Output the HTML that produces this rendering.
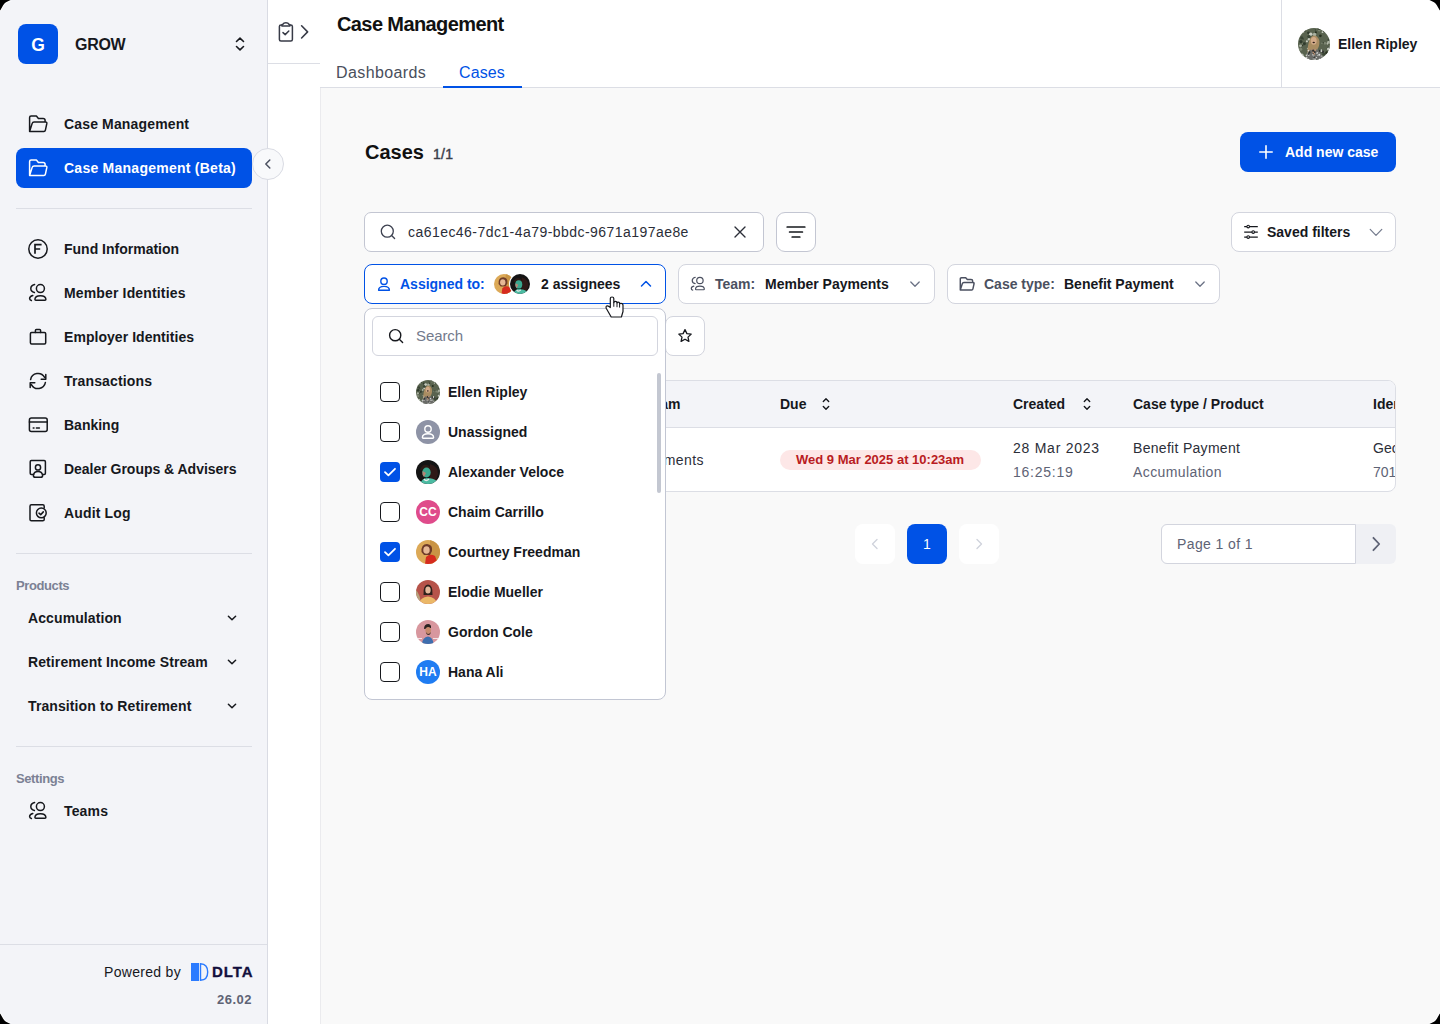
<!DOCTYPE html>
<html><head><meta charset="utf-8">
<style>
*{box-sizing:border-box;margin:0;padding:0}
html,body{width:1440px;height:1024px;overflow:hidden;background:#000}
body{font-family:"Liberation Sans",sans-serif;color:#16181d;position:relative}
.win{position:absolute;left:0;top:0;width:1440px;height:1024px;overflow:hidden;background:#f9f9f9}
.a{position:absolute}
svg{display:block;position:absolute;overflow:visible}
.st{fill:none;stroke:#16181d;stroke-width:1.5;stroke-linecap:round;stroke-linejoin:round}
.b{font-weight:700}
.nw{white-space:nowrap}
/* sidebar */
.side{position:absolute;left:0;top:0;width:268px;height:1024px;background:#f3f4f8;border-right:1px solid #d9dbe3}
.logo{position:absolute;left:18px;top:24px;width:40px;height:40px;border-radius:8px;background:#0052e6;color:#fff;font-weight:700;font-size:17.5px;line-height:42px;text-align:center}
.nv{position:absolute;left:64px;font-size:14px;font-weight:700;line-height:18px;white-space:nowrap;color:#16181d;letter-spacing:0.15px}
.hr{position:absolute;left:16px;width:236px;height:1px;background:#dcdee5}
.sec{position:absolute;left:16px;font-size:13px;font-weight:700;color:#7b8194;line-height:16px;letter-spacing:-0.4px}
.prod{position:absolute;left:28px;font-size:14px;font-weight:700;line-height:18px;color:#16181d;white-space:nowrap;letter-spacing:0.1px}
.col2{position:absolute;left:268px;top:0;width:52px;height:1024px;background:#fff}
.hdr{position:absolute;left:320px;top:0;width:1120px;height:88px;background:#fff;border-bottom:1px solid #dcdee5}
</style></head>
<body><div class="win">

<!-- SIDEBAR -->
<div class="side">
  <div class="logo">G</div>
  <div class="a b" style="left:75px;top:36px;font-size:16px;line-height:18px;letter-spacing:-0.3px">GROW</div>
  <svg style="left:230px;top:34px" width="20" height="20" viewBox="0 0 20 20"><path class="st" d="M6.5 7.5L10 4.2l3.5 3.3M6.5 12.5L10 15.8l3.5-3.3" style="stroke-width:1.6"/></svg>

  <svg style="left:28px;top:114px" width="20" height="20" viewBox="0 0 20 20"><path class="st" d="M1.6 17.6V3.6Q1.6 2.1 3.1 2.1H8.4L10.4 4.4H15.1Q17.1 4.4 17.1 6.4V8.1M1.6 17.6L4.1 9.6Q4.6 8.1 6.1 8.1H17.6Q19.1 8.1 18.8 9.7L17.4 16.2Q17.1 17.6 15.9 17.6Z"/></svg>
  <div class="nv" style="top:115px">Case Management</div>

  <div class="a" style="left:16px;top:148px;width:236px;height:40px;border-radius:8px;background:#0052e6"></div>
  <svg style="left:28px;top:158px" width="20" height="20" viewBox="0 0 20 20"><path class="st" style="stroke:#fff" d="M1.6 17.6V3.6Q1.6 2.1 3.1 2.1H8.4L10.4 4.4H15.1Q17.1 4.4 17.1 6.4V8.1M1.6 17.6L4.1 9.6Q4.6 8.1 6.1 8.1H17.6Q19.1 8.1 18.8 9.7L17.4 16.2Q17.1 17.6 15.9 17.6Z"/></svg>
  <div class="nv" style="top:159px;color:#fff;letter-spacing:0.25px">Case Management (Beta)</div>

  <div class="hr" style="top:208px"></div>

  <svg style="left:28px;top:239px" width="20" height="20" viewBox="0 0 20 20"><circle class="st" cx="10" cy="10" r="9.2"/><path class="st" d="M7 14.8V5.6h6.6M7 10h5.2" style="stroke-linecap:butt;stroke-linejoin:miter;stroke-width:1.7"/></svg>
  <div class="nv" style="top:240px;letter-spacing:0">Fund Information</div>

  <svg style="left:28px;top:283px" width="20" height="20" viewBox="0 0 20 20"><circle class="st" cx="12.4" cy="5.6" r="4"/><path class="st" d="M6.9 16.3Q7.1 12.7 12.4 12.7Q17.7 12.7 17.9 16.3Q17.9 17.2 17 17.2H7.8Q6.9 17.2 6.9 16.3Z"/><path class="st" d="M6.6 1.6Q2.8 2.6 2.8 5.6Q2.8 8.8 6.4 9.6M4.8 12.6Q1.6 13.4 1.6 15.6Q1.6 17.2 3.4 17.6"/></svg>
  <div class="nv" style="top:284px">Member Identities</div>

  <svg style="left:28px;top:327px" width="20" height="20" viewBox="0 0 20 20"><rect class="st" x="2.4" y="5.6" width="15.3" height="11.4" rx="1.2"/><path class="st" d="M7.4 5.4V3.4Q7.4 2.4 8.4 2.4H11.6Q12.6 2.4 12.6 3.4V5.4"/></svg>
  <div class="nv" style="top:328px;letter-spacing:0.05px">Employer Identities</div>

  <svg style="left:28px;top:371px" width="20" height="20" viewBox="0 0 20 20"><path class="st" d="M2.6 8.6A7.5 7.5 0 0 1 16.6 6.4M17.8 3.4V8.2H13.2M17.4 11.4A7.5 7.5 0 0 1 3.4 13.6M2.2 16.6V11.8H6.8"/></svg>
  <div class="nv" style="top:372px">Transactions</div>

  <svg style="left:28px;top:415px" width="20" height="20" viewBox="0 0 20 20"><rect class="st" x="1.4" y="3" width="17.8" height="13.6" rx="2"/><path class="st" d="M1.4 6.9H19.2M5.2 13H6M8.4 13H11.4"/></svg>
  <div class="nv" style="top:416px;letter-spacing:0">Banking</div>

  <svg style="left:28px;top:459px" width="20" height="20" viewBox="0 0 20 20"><path class="st" d="M5.6 15.4H3.4Q2.2 15.4 2.2 14.2V2.8Q2.2 1.6 3.4 1.6H16.2Q17.4 1.6 17.4 2.8V14.2Q17.4 15.4 16.2 15.4H14.6"/><circle class="st" cx="10" cy="8.4" r="2.6"/><path class="st" d="M5.4 16.4Q6 12.6 10 12.6Q14 12.6 14.6 16.4Q14.6 18.3 12.6 18.3H7.4Q5.4 18.3 5.4 16.4Z"/></svg>
  <div class="nv" style="top:460px;letter-spacing:-0.02px">Dealer Groups &amp; Advisers</div>

  <svg style="left:28px;top:503px" width="20" height="20" viewBox="0 0 20 20"><path class="st" d="M16.2 5V3.2Q16.2 1.8 14.8 1.8H3.4Q2 1.8 2 3.2V16.4Q2 17.8 3.4 17.8H14.8Q16.2 17.8 16.2 16.4V14.8"/><circle class="st" cx="13.3" cy="9.9" r="4.9"/><path class="st" d="M11 10.2L12.7 11.7L15.3 8.9" style="stroke-width:1.6"/></svg>
  <div class="nv" style="top:504px">Audit Log</div>

  <div class="hr" style="top:553px"></div>
  <div class="sec" style="top:578px">Products</div>
  <div class="prod" style="top:609px">Accumulation</div>
  <svg style="left:222px;top:608px" width="20" height="20" viewBox="0 0 20 20"><path class="st" d="M6.4 8.2L10 11.8L13.6 8.2"/></svg>
  <div class="prod" style="top:653px">Retirement Income Stream</div>
  <svg style="left:222px;top:652px" width="20" height="20" viewBox="0 0 20 20"><path class="st" d="M6.4 8.2L10 11.8L13.6 8.2"/></svg>
  <div class="prod" style="top:697px">Transition to Retirement</div>
  <svg style="left:222px;top:696px" width="20" height="20" viewBox="0 0 20 20"><path class="st" d="M6.4 8.2L10 11.8L13.6 8.2"/></svg>

  <div class="hr" style="top:746px"></div>
  <div class="sec" style="top:771px">Settings</div>
  <svg style="left:28px;top:801px" width="20" height="20" viewBox="0 0 20 20"><circle class="st" cx="12.4" cy="5.6" r="4"/><path class="st" d="M6.9 16.3Q7.1 12.7 12.4 12.7Q17.7 12.7 17.9 16.3Q17.9 17.2 17 17.2H7.8Q6.9 17.2 6.9 16.3Z"/><path class="st" d="M6.6 1.6Q2.8 2.6 2.8 5.6Q2.8 8.8 6.4 9.6M4.8 12.6Q1.6 13.4 1.6 15.6Q1.6 17.2 3.4 17.6"/></svg>
  <div class="nv" style="top:802px">Teams</div>

  <div class="a" style="left:0;top:944px;width:267px;height:1px;background:#dcdee5"></div>
  <div class="a nw" style="left:104px;top:964px;font-size:14px;line-height:16px;color:#16181d;letter-spacing:0.3px">Powered by</div>
  <div class="a" style="left:191px;top:963px;width:8px;height:18px;background:#2b7bff"></div>
  <svg style="left:199px;top:963px" width="12" height="18" viewBox="0 0 12 18"><path d="M1.5 0.7Q8.7 1 8.7 9Q8.7 17 1.5 17.3Z" fill="none" stroke="#2b7bff" stroke-width="1.4"/></svg>
  <div class="a b nw" style="left:212px;top:963px;font-size:15px;line-height:17px;color:#120f3d;letter-spacing:0.9px;-webkit-text-stroke:0.3px #120f3d">DLTA</div>
  <div class="a b nw" style="left:217px;top:992px;font-size:13px;line-height:15px;color:#5e6375;letter-spacing:0.5px">26.02</div>
</div>

<!-- COLUMN 2 -->
<div class="col2">
  <svg style="left:8px;top:22px" width="20" height="20" viewBox="0 0 20 20"><path class="st" style="stroke:#383b47" d="M5.8 2.9H5Q3.4 2.9 3.4 4.5V17.6Q3.4 19.1 5 19.1H14.8Q16.4 19.1 16.4 17.6V4.5Q16.4 2.9 14.8 2.9H14"/><path class="st" style="stroke:#383b47" d="M5.9 3.9V3.1Q5.9 2.4 6.8 2.3Q7.6 0.8 9.9 0.8Q12.2 0.8 13 2.3Q13.9 2.4 13.9 3.1V3.9Z"/><path class="st" style="stroke:#383b47" d="M7 10.6L9.2 12.6L12.8 9"/></svg>
  <svg style="left:30px;top:22px" width="20" height="20" viewBox="0 0 20 20"><path class="st" d="M3.6 3.8L9.6 9.9L3.6 16" style="stroke-width:1.6;stroke:#383b47"/></svg>
  <div class="a" style="left:0;top:63px;width:52px;height:1px;background:#dcdee5"></div>
</div>

<!-- HEADER -->
<div class="hdr">
  <div class="a b nw" style="left:17px;top:12px;font-size:20px;line-height:24px;letter-spacing:-0.6px;color:#111">Case Management</div>
  <div class="a nw" style="left:16px;top:63px;font-size:16px;line-height:20px;color:#4a4f5c;letter-spacing:0.4px">Dashboards</div>
  <div class="a nw" style="left:139px;top:63px;font-size:16px;line-height:20px;color:#0052e6;letter-spacing:0.1px">Cases</div>
  <div class="a" style="left:123px;top:86px;width:79px;height:2px;background:#0052e6"></div>
  <div class="a" style="left:961px;top:0;width:1px;height:87px;background:#dcdee5"></div>
</div>


<!-- HEADER USER -->
<div class="a" style="left:1298px;top:28px;width:32px;height:32px"><svg width="32" height="32" viewBox="0 0 24 24" style="position:static"><clipPath id="ch1"><circle cx="12" cy="12" r="12"/></clipPath><g clip-path="url(#ch1)"><rect width="24" height="24" fill="#59634f"/><circle cx="7.8" cy="3.6" r="1.0" fill="#2f3a2c"/><circle cx="19.7" cy="2.3" r="1.0" fill="#27301f"/><circle cx="5.2" cy="2.1" r="0.8" fill="#3a4536"/><circle cx="2.2" cy="10.2" r="1.2" fill="#2f3a2c"/><circle cx="22.7" cy="15.1" r="1.0" fill="#2f3a2c"/><circle cx="13.9" cy="9.5" r="1.3" fill="#2f3a2c"/><circle cx="13.4" cy="3.2" r="0.8" fill="#27301f"/><circle cx="2.8" cy="7.4" r="1.2" fill="#3a4536"/><circle cx="2.5" cy="13.7" r="0.7" fill="#2f3a2c"/><circle cx="13.1" cy="1.5" r="0.5" fill="#3a4536"/><circle cx="11.9" cy="12.8" r="1.1" fill="#c6cbbf"/><circle cx="14.1" cy="10.9" r="0.7" fill="#3a4536"/><circle cx="16.8" cy="5.9" r="1.0" fill="#27301f"/><circle cx="11.9" cy="8.2" r="0.9" fill="#27301f"/><circle cx="23.5" cy="2.8" r="0.8" fill="#a9b0a0"/><circle cx="3.6" cy="11.7" r="0.5" fill="#7d8672"/><circle cx="1.9" cy="13.4" r="1.1" fill="#a9b0a0"/><circle cx="8.2" cy="8.4" r="0.9" fill="#c6cbbf"/><circle cx="1.7" cy="2.2" r="0.7" fill="#7d8672"/><circle cx="15.9" cy="1.5" r="1.1" fill="#7d8672"/><circle cx="13.9" cy="16.3" r="0.9" fill="#7d8672"/><circle cx="9.3" cy="16.0" r="0.5" fill="#c6cbbf"/><circle cx="8.5" cy="14.7" r="0.9" fill="#3a4536"/><circle cx="18.4" cy="3.1" r="0.7" fill="#c6cbbf"/><circle cx="22.0" cy="11.9" r="0.6" fill="#c6cbbf"/><circle cx="13.2" cy="21.2" r="1.2" fill="#27301f"/><circle cx="6.7" cy="10.0" r="0.8" fill="#c6cbbf"/><circle cx="23.0" cy="3.6" r="0.6" fill="#3a4536"/><circle cx="15.8" cy="0.3" r="1.2" fill="#3a4536"/><circle cx="6.3" cy="0.1" r="0.8" fill="#a9b0a0"/><circle cx="14.6" cy="7.6" r="0.6" fill="#27301f"/><circle cx="22.8" cy="15.7" r="1.1" fill="#c6cbbf"/><circle cx="21.6" cy="18.7" r="1.2" fill="#27301f"/><circle cx="9.4" cy="9.6" r="0.6" fill="#7d8672"/><circle cx="9.6" cy="4.6" r="1.3" fill="#c6cbbf"/><circle cx="3.9" cy="8.2" r="0.5" fill="#2f3a2c"/><circle cx="13.6" cy="12.9" r="1.3" fill="#27301f"/><circle cx="0.6" cy="21.0" r="1.0" fill="#3a4536"/><circle cx="15.2" cy="22.9" r="1.0" fill="#c6cbbf"/><circle cx="2.9" cy="20.4" r="1.3" fill="#c6cbbf"/><circle cx="11.5" cy="7.5" r="0.6" fill="#7d8672"/><circle cx="8.2" cy="6.4" r="1.2" fill="#3a4536"/><circle cx="12.4" cy="4.9" r="1.3" fill="#a9b0a0"/><circle cx="3.5" cy="13.0" r="0.5" fill="#27301f"/><circle cx="7.2" cy="15.4" r="0.6" fill="#a9b0a0"/><circle cx="12.4" cy="21.8" r="0.8" fill="#3a4536"/><circle cx="12.8" cy="18.7" r="0.8" fill="#3a4536"/><circle cx="14.7" cy="18.9" r="1.1" fill="#3a4536"/><circle cx="19.3" cy="19.6" r="1.1" fill="#3a4536"/><circle cx="4.8" cy="11.8" r="1.1" fill="#2f3a2c"/><circle cx="19.0" cy="11.3" r="0.7" fill="#27301f"/><circle cx="23.0" cy="10.7" r="1.2" fill="#a9b0a0"/><circle cx="22.9" cy="8.8" r="0.7" fill="#3a4536"/><circle cx="11.3" cy="8.1" r="0.9" fill="#27301f"/><circle cx="20.2" cy="11.5" r="1.0" fill="#7d8672"/><circle cx="2.0" cy="15.9" r="1.2" fill="#7d8672"/><circle cx="18.0" cy="11.5" r="0.6" fill="#7d8672"/><circle cx="8.0" cy="19.2" r="1.3" fill="#c6cbbf"/><circle cx="11.1" cy="17.8" r="0.6" fill="#3a4536"/><circle cx="4.1" cy="3.0" r="0.6" fill="#c6cbbf"/><path d="M7 19Q7.5 6.5 12 5.6Q16.5 6 16 12Q15.6 16 13 17L9 19Z" fill="#a98d62"/><ellipse cx="11.8" cy="9.6" rx="2.2" ry="2.9" fill="#d2aa88"/><ellipse cx="11.8" cy="10.9" rx="0.9" ry="0.6" fill="#2b1c18"/><path d="M5.5 24Q6.5 16 12 15.8Q17.5 16 18.5 24Z" fill="#6a6b68"/><path d="M10 16L12 21L13.6 16Z" fill="#c99a78"/><circle cx="16.5" cy="17.2" r="0.8" fill="#2e302e"/><circle cx="14.5" cy="18.8" r="0.7" fill="#d8dad6"/><circle cx="6.3" cy="22.4" r="0.8" fill="#d8dad6"/><circle cx="12.8" cy="23.5" r="0.6" fill="#d8dad6"/><circle cx="16.7" cy="17.7" r="0.5" fill="#2e302e"/><circle cx="12.5" cy="22.1" r="0.6" fill="#9a9c98"/><circle cx="11.4" cy="17.0" r="0.9" fill="#2e302e"/><circle cx="17.7" cy="21.3" r="0.8" fill="#9a9c98"/><circle cx="11.5" cy="23.3" r="0.7" fill="#9a9c98"/><circle cx="8.0" cy="20.1" r="0.8" fill="#d8dad6"/><circle cx="13.9" cy="22.2" r="0.5" fill="#d8dad6"/><circle cx="12.2" cy="21.8" r="0.7" fill="#2e302e"/><circle cx="14.9" cy="20.2" r="0.6" fill="#d8dad6"/><circle cx="17.5" cy="16.5" r="0.5" fill="#d8dad6"/><circle cx="16.0" cy="20.1" r="0.7" fill="#d8dad6"/><circle cx="11.8" cy="20.9" r="0.7" fill="#9a9c98"/><circle cx="8.6" cy="18.2" r="0.7" fill="#2e302e"/><circle cx="12.6" cy="18.0" r="0.7" fill="#2e302e"/><circle cx="18.0" cy="23.1" r="0.5" fill="#2e302e"/><circle cx="7.8" cy="17.0" r="0.6" fill="#d8dad6"/><circle cx="14.7" cy="19.4" r="0.5" fill="#2e302e"/><circle cx="16.2" cy="23.2" r="0.5" fill="#9a9c98"/><circle cx="14.4" cy="18.9" r="0.5" fill="#d8dad6"/><circle cx="18.6" cy="17.8" r="0.9" fill="#2e302e"/><circle cx="17.5" cy="17.3" r="0.7" fill="#d8dad6"/><circle cx="8.1" cy="19.5" r="0.7" fill="#2e302e"/><circle cx="11.5" cy="18.9" r="0.4" fill="#2e302e"/><circle cx="6.3" cy="20.4" r="0.6" fill="#d8dad6"/><circle cx="11.0" cy="20.1" r="0.5" fill="#d8dad6"/><circle cx="7.5" cy="23.3" r="0.5" fill="#d8dad6"/></g></svg></div>
<div class="a b nw" style="left:1338px;top:36px;font-size:14px;line-height:17px;color:#16181d">Ellen Ripley</div>

<!-- MAIN -->
<div class="a b nw" style="left:365px;top:141px;font-size:20px;line-height:22px;color:#111">Cases</div>
<div class="a nw" style="left:433px;top:147px;font-size:14px;line-height:14px;color:#3b3f4b;-webkit-text-stroke:0.45px #3b3f4b;letter-spacing:0.3px">1/1</div>

<div class="a" style="left:1240px;top:132px;width:156px;height:40px;border-radius:8px;background:#0052e6"></div>
<svg style="left:1258px;top:144px" width="16" height="16" viewBox="0 0 16 16"><path d="M8 1.8V14.2M1.8 8H14.2" stroke="#fff" stroke-width="1.6" stroke-linecap="round"/></svg>
<div class="a b nw" style="left:1285px;top:144px;font-size:14px;line-height:16px;color:#fff">Add new case</div>

<!-- search -->
<div class="a" style="left:364px;top:212px;width:400px;height:40px;border-radius:7px;background:#fff;border:1px solid #c3c6d2"></div>
<svg style="left:380px;top:224px" width="16" height="16" viewBox="0 0 16 16"><circle cx="7.3" cy="7.2" r="6" fill="none" stroke="#3d4150" stroke-width="1.3"/><path d="M11.6 11.5L14.6 14.5" stroke="#3d4150" stroke-width="1.3" stroke-linecap="round"/></svg>
<div class="a nw" style="left:408px;top:224px;font-size:14px;line-height:16px;color:#2b2e38;letter-spacing:0.45px">ca61ec46-7dc1-4a79-bbdc-9671a197ae8e</div>
<svg style="left:732px;top:224px" width="16" height="16" viewBox="0 0 16 16"><path d="M3 3L13 13M13 3L3 13" stroke="#2b2e38" stroke-width="1.35" stroke-linecap="round"/></svg>

<div class="a" style="left:776px;top:212px;width:40px;height:40px;border-radius:9px;background:#fff;border:1px solid #c3c6d2"></div>
<svg style="left:786px;top:222px" width="20" height="20" viewBox="0 0 20 20"><path d="M1.2 5H18.8M3.6 10H16.4M6.2 15H13.8" stroke="#16181d" stroke-width="1.7" stroke-linecap="round"/></svg>

<div class="a" style="left:1231px;top:212px;width:165px;height:40px;border-radius:8px;background:#fff;border:1px solid #d3d5de"></div>
<svg style="left:1243px;top:223px" width="16" height="18" viewBox="0 0 16 18"><path d="M1.2 3.6H14.8M1.2 9.1H14.8M1.2 14.1H14.8" stroke="#16181d" stroke-width="1.2"/><circle cx="5.2" cy="3.6" r="1.3" fill="#fff" stroke="#16181d" stroke-width="1.1"/><circle cx="10.2" cy="9.1" r="1.3" fill="#fff" stroke="#16181d" stroke-width="1.1"/><circle cx="5.2" cy="14.1" r="1.3" fill="#fff" stroke="#16181d" stroke-width="1.1"/></svg>
<div class="a b nw" style="left:1267px;top:224px;font-size:14px;line-height:16px;color:#16181d">Saved filters</div>
<svg style="left:1368px;top:224px" width="16" height="16" viewBox="0 0 16 16"><path d="M2.2 5.4L8 11.4L13.8 5.4" fill="none" stroke="#737a8c" stroke-width="1.2" stroke-linecap="round" stroke-linejoin="round"/></svg>

<!-- chips -->
<div class="a" style="left:364px;top:264px;width:302px;height:40px;border-radius:8px;background:#fff;border:1px solid #0052e6"></div>
<svg style="left:376px;top:276px" width="16" height="16" viewBox="0 0 16 16"><circle cx="8" cy="5.2" r="3.2" fill="none" stroke="#0052e6" stroke-width="1.4"/><path d="M2.6 14.2Q2.6 10.4 8 10.4Q13.4 10.4 13.4 14.2Z" fill="none" stroke="#0052e6" stroke-width="1.4" stroke-linejoin="round"/></svg>
<div class="a b nw" style="left:400px;top:276px;font-size:14px;line-height:16px;color:#0052e6">Assigned to:</div>
<div class="a" style="left:494px;top:274px;width:20px;height:20px"><svg width="20" height="20" viewBox="0 0 24 24" style="position:static"><clipPath id="cc1"><circle cx="12" cy="12" r="12"/></clipPath><g clip-path="url(#cc1)"><rect width="24" height="24" fill="#dca957"/><rect x="14" width="10" height="24" fill="#c99445"/><path d="M5.5 12Q5 4 11 4Q17 4.5 16 11L14 15H8Z" fill="#6e3b29"/><ellipse cx="10.5" cy="10" rx="3.2" ry="3.8" fill="#e6b896"/><path d="M9 24L10 17Q14 13 19 16L22 24Z" fill="#d62b1f"/></g></svg></div>
<div class="a" style="left:509px;top:273px;width:22px;height:22px;border-radius:50%;background:#fff"></div>
<div class="a" style="left:510px;top:274px;width:20px;height:20px"><svg width="20" height="20" viewBox="0 0 24 24" style="position:static"><clipPath id="cc2"><circle cx="12" cy="12" r="12"/></clipPath><g clip-path="url(#cc2)"><rect width="24" height="24" fill="#141414"/><path d="M14 4Q22 6 22 14L20 20H14Z" fill="#3a1d18" opacity=".7"/><path d="M4 10Q6 4 11 5Q15 6 14 10Z" fill="#2b1a15"/><ellipse cx="10.5" cy="12.5" rx="4.2" ry="5" fill="#3aa88f"/><path d="M6.5 11Q6 15 8 17L10 13Z" fill="#b98476"/><path d="M4 24Q6 18 11 18Q17 18 21 21L22 24Z" fill="#4bbba2"/><path d="M8 19Q10 22 13 19" stroke="#e8e8e8" stroke-width="1.4" fill="none"/></g></svg></div>
<div class="a b nw" style="left:541px;top:276px;font-size:14px;line-height:16px;color:#16181d">2 assignees</div>
<svg style="left:638px;top:276px" width="16" height="16" viewBox="0 0 16 16"><path d="M3.5 10L8 5.5L12.5 10" fill="none" stroke="#0052e6" stroke-width="1.5" stroke-linecap="round" stroke-linejoin="round"/></svg>

<div class="a" style="left:678px;top:264px;width:257px;height:40px;border-radius:8px;background:#fff;border:1px solid #d3d5de"></div>
<svg style="left:690px;top:276px" width="16" height="16" viewBox="0 0 20 20"><circle class="st" cx="12.4" cy="5.6" r="4" style="stroke:#4b5060"/><path class="st" style="stroke:#4b5060" d="M6.9 16.3Q7.1 12.7 12.4 12.7Q17.7 12.7 17.9 16.3Q17.9 17.2 17 17.2H7.8Q6.9 17.2 6.9 16.3Z"/><path class="st" style="stroke:#4b5060" d="M6.6 1.6Q2.8 2.6 2.8 5.6Q2.8 8.8 6.4 9.6M4.8 12.6Q1.6 13.4 1.6 15.6Q1.6 17.2 3.4 17.6"/></svg>
<div class="a b nw" style="left:715px;top:276px;font-size:14px;line-height:16px;color:#4b5060">Team:</div>
<div class="a b nw" style="left:765px;top:276px;font-size:14px;line-height:16px;color:#16181d">Member Payments</div>
<svg style="left:907px;top:276px" width="16" height="16" viewBox="0 0 16 16"><path d="M3.8 6L8 10.2L12.2 6" fill="none" stroke="#6b7285" stroke-width="1.3" stroke-linecap="round" stroke-linejoin="round"/></svg>

<div class="a" style="left:947px;top:264px;width:273px;height:40px;border-radius:8px;background:#fff;border:1px solid #d3d5de"></div>
<svg style="left:959px;top:276px" width="16" height="16" viewBox="0 0 20 20"><path class="st" style="stroke:#4b5060;stroke-width:1.8" d="M1.6 17.6V3.6Q1.6 2.1 3.1 2.1H8.4L10.4 4.4H15.1Q17.1 4.4 17.1 6.4V8.1M1.6 17.6L4.1 9.6Q4.6 8.1 6.1 8.1H17.6Q19.1 8.1 18.8 9.7L17.4 16.2Q17.1 17.6 15.9 17.6Z"/></svg>
<div class="a b nw" style="left:984px;top:276px;font-size:14px;line-height:16px;color:#4b5060">Case type:</div>
<div class="a b nw" style="left:1064px;top:276px;font-size:14px;line-height:16px;color:#16181d">Benefit Payment</div>
<svg style="left:1192px;top:276px" width="16" height="16" viewBox="0 0 16 16"><path d="M3.8 6L8 10.2L12.2 6" fill="none" stroke="#6b7285" stroke-width="1.3" stroke-linecap="round" stroke-linejoin="round"/></svg>

<!-- star button -->
<div class="a" style="left:665px;top:316px;width:40px;height:40px;border-radius:8px;background:#fff;border:1px solid #d3d5de"></div>
<svg style="left:677px;top:328px" width="16" height="16" viewBox="0 0 16 16"><path d="M8 1.6L9.9 5.6L14.2 6.1L11 9.1L11.9 13.4L8 11.2L4.1 13.4L5 9.1L1.8 6.1L6.1 5.6Z" fill="none" stroke="#16181d" stroke-width="1.3" stroke-linejoin="round"/></svg>

<!-- table -->
<div class="a" style="left:364px;top:380px;width:1032px;height:112px;border-radius:8px;background:#fff;border:1px solid #dcdee5;overflow:hidden">
  <div class="a" style="left:0;top:0;width:1032px;height:47px;background:#f3f4f8;border-bottom:1px solid #dcdee5"></div>
  <div class="a b nw" style="left:280px;top:15px;font-size:14px;line-height:16px;color:#16181d">Team</div>
  <div class="a nw" style="left:216px;top:71px;font-size:14px;line-height:16px;color:#2b2e38;letter-spacing:0.35px">Member Payments</div>
  <div class="a b nw" style="left:415px;top:15px;font-size:14px;line-height:16px;color:#16181d">Due</div>
  <svg style="left:453px;top:14px" width="16" height="18" viewBox="0 0 16 18"><path d="M5.3 6.4L8 3.7L10.7 6.4M5.3 11.6L8 14.3L10.7 11.6" fill="none" stroke="#16181d" stroke-width="1.4" stroke-linecap="round" stroke-linejoin="round"/></svg>
  <div class="a" style="left:415px;top:69px;width:201px;height:20px;border-radius:10px;background:#fde7e7"></div>
  <div class="a b nw" style="left:431px;top:72px;font-size:13px;line-height:14px;color:#b91c22">Wed 9 Mar 2025 at 10:23am</div>
  <div class="a b nw" style="left:648px;top:15px;font-size:14px;line-height:16px;color:#16181d">Created</div>
  <svg style="left:714px;top:14px" width="16" height="18" viewBox="0 0 16 18"><path d="M5.3 6.4L8 3.7L10.7 6.4M5.3 11.6L8 14.3L10.7 11.6" fill="none" stroke="#16181d" stroke-width="1.4" stroke-linecap="round" stroke-linejoin="round"/></svg>
  <div class="a nw" style="left:648px;top:59px;font-size:14px;line-height:16px;color:#2b2e38;letter-spacing:0.75px">28 Mar 2023</div>
  <div class="a nw" style="left:648px;top:83px;font-size:14px;line-height:16px;color:#5e6375;letter-spacing:0.75px">16:25:19</div>
  <div class="a b nw" style="left:768px;top:15px;font-size:14px;line-height:16px;color:#16181d">Case type / Product</div>
  <div class="a nw" style="left:768px;top:59px;font-size:14px;line-height:16px;color:#2b2e38;letter-spacing:0.3px">Benefit Payment</div>
  <div class="a nw" style="left:768px;top:83px;font-size:14px;line-height:16px;color:#5e6375;letter-spacing:0.4px">Accumulation</div>
  <div class="a b nw" style="left:1008px;top:15px;font-size:14px;line-height:16px;color:#16181d">Identity</div>
  <div class="a nw" style="left:1008px;top:59px;font-size:14px;line-height:16px;color:#2b2e38">George</div>
  <div class="a nw" style="left:1008px;top:83px;font-size:14px;line-height:16px;color:#5e6375">70123</div>
</div>

<!-- pagination -->
<div class="a" style="left:855px;top:524px;width:40px;height:40px;border-radius:8px;background:#fff"></div>
<svg style="left:867px;top:536px" width="16" height="16" viewBox="0 0 16 16"><path d="M10 3.5L5.5 8L10 12.5" fill="none" stroke="#d0d3dc" stroke-width="1.4" stroke-linecap="round" stroke-linejoin="round"/></svg>
<div class="a" style="left:907px;top:524px;width:40px;height:40px;border-radius:8px;background:#0052e6;color:#fff;font-size:14px;line-height:40px;text-align:center">1</div>
<div class="a" style="left:959px;top:524px;width:40px;height:40px;border-radius:8px;background:#fff"></div>
<svg style="left:971px;top:536px" width="16" height="16" viewBox="0 0 16 16"><path d="M6 3.5L10.5 8L6 12.5" fill="none" stroke="#d0d3dc" stroke-width="1.4" stroke-linecap="round" stroke-linejoin="round"/></svg>

<div class="a" style="left:1161px;top:524px;width:235px;height:40px;border-radius:6px;background:#eff0f4"></div>
<div class="a" style="left:1161px;top:524px;width:195px;height:40px;border-radius:6px 0 0 6px;background:#fff;border:1px solid #d3d5de"></div>
<div class="a nw" style="left:1177px;top:536px;font-size:14px;line-height:16px;color:#5e6375;letter-spacing:0.4px">Page 1 of 1</div>
<svg style="left:1368px;top:536px" width="16" height="16" viewBox="0 0 16 16"><path d="M5.4 1.8L11.2 8L5.4 14.2" fill="none" stroke="#5e6375" stroke-width="1.8" stroke-linecap="round" stroke-linejoin="round"/></svg>

<!-- DROPDOWN -->
<div class="a" style="left:364px;top:308px;width:302px;height:392px;border-radius:8px;background:#fff;border:1px solid #c2c6d3"></div>
<div class="a" style="left:372px;top:316px;width:286px;height:40px;border-radius:6px;background:#fff;border:1px solid #d3d5de"></div>
<svg style="left:388px;top:328px" width="16" height="16" viewBox="0 0 16 16"><circle cx="7.2" cy="7.2" r="5.6" fill="none" stroke="#16181d" stroke-width="1.4"/><path d="M11.3 11.3L14.6 14.6" stroke="#16181d" stroke-width="1.4" stroke-linecap="round"/></svg>
<div class="a nw" style="left:416px;top:328px;font-size:15px;line-height:16px;color:#737a8c;letter-spacing:-0.1px">Search</div>
<div class="a" style="left:657px;top:373px;width:4px;height:120px;border-radius:2px;background:#c3c7d1"></div>
<div class="a" style="left:380px;top:382px;width:20px;height:20px;border-radius:4px;background:#fff;border:1.5px solid #16181d"></div>
<div class="a" style="left:416px;top:380px;width:24px;height:24px"><svg width="24" height="24" viewBox="0 0 24 24" style="position:static"><clipPath id="cd1"><circle cx="12" cy="12" r="12"/></clipPath><g clip-path="url(#cd1)"><rect width="24" height="24" fill="#59634f"/><circle cx="7.8" cy="3.6" r="1.0" fill="#2f3a2c"/><circle cx="19.7" cy="2.3" r="1.0" fill="#27301f"/><circle cx="5.2" cy="2.1" r="0.8" fill="#3a4536"/><circle cx="2.2" cy="10.2" r="1.2" fill="#2f3a2c"/><circle cx="22.7" cy="15.1" r="1.0" fill="#2f3a2c"/><circle cx="13.9" cy="9.5" r="1.3" fill="#2f3a2c"/><circle cx="13.4" cy="3.2" r="0.8" fill="#27301f"/><circle cx="2.8" cy="7.4" r="1.2" fill="#3a4536"/><circle cx="2.5" cy="13.7" r="0.7" fill="#2f3a2c"/><circle cx="13.1" cy="1.5" r="0.5" fill="#3a4536"/><circle cx="11.9" cy="12.8" r="1.1" fill="#c6cbbf"/><circle cx="14.1" cy="10.9" r="0.7" fill="#3a4536"/><circle cx="16.8" cy="5.9" r="1.0" fill="#27301f"/><circle cx="11.9" cy="8.2" r="0.9" fill="#27301f"/><circle cx="23.5" cy="2.8" r="0.8" fill="#a9b0a0"/><circle cx="3.6" cy="11.7" r="0.5" fill="#7d8672"/><circle cx="1.9" cy="13.4" r="1.1" fill="#a9b0a0"/><circle cx="8.2" cy="8.4" r="0.9" fill="#c6cbbf"/><circle cx="1.7" cy="2.2" r="0.7" fill="#7d8672"/><circle cx="15.9" cy="1.5" r="1.1" fill="#7d8672"/><circle cx="13.9" cy="16.3" r="0.9" fill="#7d8672"/><circle cx="9.3" cy="16.0" r="0.5" fill="#c6cbbf"/><circle cx="8.5" cy="14.7" r="0.9" fill="#3a4536"/><circle cx="18.4" cy="3.1" r="0.7" fill="#c6cbbf"/><circle cx="22.0" cy="11.9" r="0.6" fill="#c6cbbf"/><circle cx="13.2" cy="21.2" r="1.2" fill="#27301f"/><circle cx="6.7" cy="10.0" r="0.8" fill="#c6cbbf"/><circle cx="23.0" cy="3.6" r="0.6" fill="#3a4536"/><circle cx="15.8" cy="0.3" r="1.2" fill="#3a4536"/><circle cx="6.3" cy="0.1" r="0.8" fill="#a9b0a0"/><circle cx="14.6" cy="7.6" r="0.6" fill="#27301f"/><circle cx="22.8" cy="15.7" r="1.1" fill="#c6cbbf"/><circle cx="21.6" cy="18.7" r="1.2" fill="#27301f"/><circle cx="9.4" cy="9.6" r="0.6" fill="#7d8672"/><circle cx="9.6" cy="4.6" r="1.3" fill="#c6cbbf"/><circle cx="3.9" cy="8.2" r="0.5" fill="#2f3a2c"/><circle cx="13.6" cy="12.9" r="1.3" fill="#27301f"/><circle cx="0.6" cy="21.0" r="1.0" fill="#3a4536"/><circle cx="15.2" cy="22.9" r="1.0" fill="#c6cbbf"/><circle cx="2.9" cy="20.4" r="1.3" fill="#c6cbbf"/><circle cx="11.5" cy="7.5" r="0.6" fill="#7d8672"/><circle cx="8.2" cy="6.4" r="1.2" fill="#3a4536"/><circle cx="12.4" cy="4.9" r="1.3" fill="#a9b0a0"/><circle cx="3.5" cy="13.0" r="0.5" fill="#27301f"/><circle cx="7.2" cy="15.4" r="0.6" fill="#a9b0a0"/><circle cx="12.4" cy="21.8" r="0.8" fill="#3a4536"/><circle cx="12.8" cy="18.7" r="0.8" fill="#3a4536"/><circle cx="14.7" cy="18.9" r="1.1" fill="#3a4536"/><circle cx="19.3" cy="19.6" r="1.1" fill="#3a4536"/><circle cx="4.8" cy="11.8" r="1.1" fill="#2f3a2c"/><circle cx="19.0" cy="11.3" r="0.7" fill="#27301f"/><circle cx="23.0" cy="10.7" r="1.2" fill="#a9b0a0"/><circle cx="22.9" cy="8.8" r="0.7" fill="#3a4536"/><circle cx="11.3" cy="8.1" r="0.9" fill="#27301f"/><circle cx="20.2" cy="11.5" r="1.0" fill="#7d8672"/><circle cx="2.0" cy="15.9" r="1.2" fill="#7d8672"/><circle cx="18.0" cy="11.5" r="0.6" fill="#7d8672"/><circle cx="8.0" cy="19.2" r="1.3" fill="#c6cbbf"/><circle cx="11.1" cy="17.8" r="0.6" fill="#3a4536"/><circle cx="4.1" cy="3.0" r="0.6" fill="#c6cbbf"/><path d="M7 19Q7.5 6.5 12 5.6Q16.5 6 16 12Q15.6 16 13 17L9 19Z" fill="#a98d62"/><ellipse cx="11.8" cy="9.6" rx="2.2" ry="2.9" fill="#d2aa88"/><ellipse cx="11.8" cy="10.9" rx="0.9" ry="0.6" fill="#2b1c18"/><path d="M5.5 24Q6.5 16 12 15.8Q17.5 16 18.5 24Z" fill="#6a6b68"/><path d="M10 16L12 21L13.6 16Z" fill="#c99a78"/><circle cx="16.5" cy="17.2" r="0.8" fill="#2e302e"/><circle cx="14.5" cy="18.8" r="0.7" fill="#d8dad6"/><circle cx="6.3" cy="22.4" r="0.8" fill="#d8dad6"/><circle cx="12.8" cy="23.5" r="0.6" fill="#d8dad6"/><circle cx="16.7" cy="17.7" r="0.5" fill="#2e302e"/><circle cx="12.5" cy="22.1" r="0.6" fill="#9a9c98"/><circle cx="11.4" cy="17.0" r="0.9" fill="#2e302e"/><circle cx="17.7" cy="21.3" r="0.8" fill="#9a9c98"/><circle cx="11.5" cy="23.3" r="0.7" fill="#9a9c98"/><circle cx="8.0" cy="20.1" r="0.8" fill="#d8dad6"/><circle cx="13.9" cy="22.2" r="0.5" fill="#d8dad6"/><circle cx="12.2" cy="21.8" r="0.7" fill="#2e302e"/><circle cx="14.9" cy="20.2" r="0.6" fill="#d8dad6"/><circle cx="17.5" cy="16.5" r="0.5" fill="#d8dad6"/><circle cx="16.0" cy="20.1" r="0.7" fill="#d8dad6"/><circle cx="11.8" cy="20.9" r="0.7" fill="#9a9c98"/><circle cx="8.6" cy="18.2" r="0.7" fill="#2e302e"/><circle cx="12.6" cy="18.0" r="0.7" fill="#2e302e"/><circle cx="18.0" cy="23.1" r="0.5" fill="#2e302e"/><circle cx="7.8" cy="17.0" r="0.6" fill="#d8dad6"/><circle cx="14.7" cy="19.4" r="0.5" fill="#2e302e"/><circle cx="16.2" cy="23.2" r="0.5" fill="#9a9c98"/><circle cx="14.4" cy="18.9" r="0.5" fill="#d8dad6"/><circle cx="18.6" cy="17.8" r="0.9" fill="#2e302e"/><circle cx="17.5" cy="17.3" r="0.7" fill="#d8dad6"/><circle cx="8.1" cy="19.5" r="0.7" fill="#2e302e"/><circle cx="11.5" cy="18.9" r="0.4" fill="#2e302e"/><circle cx="6.3" cy="20.4" r="0.6" fill="#d8dad6"/><circle cx="11.0" cy="20.1" r="0.5" fill="#d8dad6"/><circle cx="7.5" cy="23.3" r="0.5" fill="#d8dad6"/></g></svg></div>
<div class="a b nw" style="left:448px;top:384px;font-size:14px;line-height:16px;color:#16181d">Ellen Ripley</div>
<div class="a" style="left:380px;top:422px;width:20px;height:20px;border-radius:4px;background:#fff;border:1.5px solid #16181d"></div>
<div class="a" style="left:416px;top:420px;width:24px;height:24px;border-radius:50%;overflow:hidden;background:#8e93a6"><svg style="left:0;top:0" width="24" height="24" viewBox="0 0 24 24"><circle cx="12" cy="9" r="3.2" fill="none" stroke="#fff" stroke-width="1.4"/><path d="M6.4 17.6Q6.4 13.8 12 13.8Q17.6 13.8 17.6 17.6Q17.6 18.3 16.9 18.3H7.1Q6.4 18.3 6.4 17.6Z" fill="none" stroke="#fff" stroke-width="1.4" stroke-linejoin="round"/></svg></div>
<div class="a b nw" style="left:448px;top:424px;font-size:14px;line-height:16px;color:#16181d">Unassigned</div>
<div class="a" style="left:380px;top:462px;width:20px;height:20px;border-radius:4px;background:#0052e6"></div><svg style="left:380px;top:462px" width="20" height="20" viewBox="0 0 20 20"><path d="M5 10.2L8.4 13.4L15 6.8" fill="none" stroke="#fff" stroke-width="1.8" stroke-linecap="round" stroke-linejoin="round"/></svg>
<div class="a" style="left:416px;top:460px;width:24px;height:24px"><svg width="24" height="24" viewBox="0 0 24 24" style="position:static"><clipPath id="cd3"><circle cx="12" cy="12" r="12"/></clipPath><g clip-path="url(#cd3)"><rect width="24" height="24" fill="#141414"/><path d="M14 4Q22 6 22 14L20 20H14Z" fill="#3a1d18" opacity=".7"/><path d="M4 10Q6 4 11 5Q15 6 14 10Z" fill="#2b1a15"/><ellipse cx="10.5" cy="12.5" rx="4.2" ry="5" fill="#3aa88f"/><path d="M6.5 11Q6 15 8 17L10 13Z" fill="#b98476"/><path d="M4 24Q6 18 11 18Q17 18 21 21L22 24Z" fill="#4bbba2"/><path d="M8 19Q10 22 13 19" stroke="#e8e8e8" stroke-width="1.4" fill="none"/></g></svg></div>
<div class="a b nw" style="left:448px;top:464px;font-size:14px;line-height:16px;color:#16181d">Alexander Veloce</div>
<div class="a" style="left:380px;top:502px;width:20px;height:20px;border-radius:4px;background:#fff;border:1.5px solid #16181d"></div>
<div class="a" style="left:416px;top:500px;width:24px;height:24px;border-radius:50%;overflow:hidden;background:#df4b8b"><div class="a b" style="left:0;top:0;width:24px;height:24px;line-height:24px;text-align:center;font-size:12px;color:#fff">CC</div></div>
<div class="a b nw" style="left:448px;top:504px;font-size:14px;line-height:16px;color:#16181d">Chaim Carrillo</div>
<div class="a" style="left:380px;top:542px;width:20px;height:20px;border-radius:4px;background:#0052e6"></div><svg style="left:380px;top:542px" width="20" height="20" viewBox="0 0 20 20"><path d="M5 10.2L8.4 13.4L15 6.8" fill="none" stroke="#fff" stroke-width="1.8" stroke-linecap="round" stroke-linejoin="round"/></svg>
<div class="a" style="left:416px;top:540px;width:24px;height:24px"><svg width="24" height="24" viewBox="0 0 24 24" style="position:static"><clipPath id="cd5"><circle cx="12" cy="12" r="12"/></clipPath><g clip-path="url(#cd5)"><rect width="24" height="24" fill="#dca957"/><rect x="14" width="10" height="24" fill="#c99445"/><path d="M5.5 12Q5 4 11 4Q17 4.5 16 11L14 15H8Z" fill="#6e3b29"/><ellipse cx="10.5" cy="10" rx="3.2" ry="3.8" fill="#e6b896"/><path d="M9 24L10 17Q14 13 19 16L22 24Z" fill="#d62b1f"/></g></svg></div>
<div class="a b nw" style="left:448px;top:544px;font-size:14px;line-height:16px;color:#16181d">Courtney Freedman</div>
<div class="a" style="left:380px;top:582px;width:20px;height:20px;border-radius:4px;background:#fff;border:1.5px solid #16181d"></div>
<div class="a" style="left:416px;top:580px;width:24px;height:24px"><svg width="24" height="24" viewBox="0 0 24 24" style="position:static"><clipPath id="cd6"><circle cx="12" cy="12" r="12"/></clipPath><g clip-path="url(#cd6)"><rect width="24" height="24" fill="#b6534a"/><path d="M0 10Q4 14 5 24H0Z" fill="#b7a27e"/><path d="M7.5 15Q7 4.5 12 4.5Q17 4.5 16.5 15Z" fill="#2e201c"/><ellipse cx="12" cy="10" rx="2.7" ry="3.6" fill="#e4b89c"/><path d="M3 24Q4 17 12 16.5Q20 17 21 24Z" fill="#ebb868"/></g></svg></div>
<div class="a b nw" style="left:448px;top:584px;font-size:14px;line-height:16px;color:#16181d">Elodie Mueller</div>
<div class="a" style="left:380px;top:622px;width:20px;height:20px;border-radius:4px;background:#fff;border:1.5px solid #16181d"></div>
<div class="a" style="left:416px;top:620px;width:24px;height:24px"><svg width="24" height="24" viewBox="0 0 24 24" style="position:static"><clipPath id="cd7"><circle cx="12" cy="12" r="12"/></clipPath><g clip-path="url(#cd7)"><rect width="24" height="24" fill="#d8979e"/><path d="M8 9Q8 4 12.5 4Q15.5 4.5 15 8Z" fill="#2a2220"/><ellipse cx="12.2" cy="10.5" rx="2.8" ry="3.6" fill="#c88a6c"/><path d="M10 12Q12 16 15 12L14 14.5Q12 15.5 10.5 14Z" fill="#3a2a22"/><path d="M6 24Q6.5 17 12 16.5Q17 17 17.5 24Z" fill="#3e6eae"/><rect x="2" y="18" width="4" height="1" fill="#f2e4e6"/><rect x="17" y="18" width="5" height="1" fill="#f2e4e6"/></g></svg></div>
<div class="a b nw" style="left:448px;top:624px;font-size:14px;line-height:16px;color:#16181d">Gordon Cole</div>
<div class="a" style="left:380px;top:662px;width:20px;height:20px;border-radius:4px;background:#fff;border:1.5px solid #16181d"></div>
<div class="a" style="left:416px;top:660px;width:24px;height:24px;border-radius:50%;overflow:hidden;background:#1f7cf2"><div class="a b" style="left:0;top:0;width:24px;height:24px;line-height:24px;text-align:center;font-size:12px;color:#fff">HA</div></div>
<div class="a b nw" style="left:448px;top:664px;font-size:14px;line-height:16px;color:#16181d">Hana Ali</div>
<!-- CURSOR -->
<svg style="left:604px;top:294px" width="20" height="26" viewBox="0 0 20 26"><path d="M6.3 13.5V4.6Q6.3 3 8 3Q9.8 3 9.8 4.6V8.6Q10 7.4 11.4 7.4Q13 7.4 13 8.8Q13.4 8.2 14.3 8.2Q15.6 8.2 15.6 9.6Q16 9.4 17 9.4Q19 9.4 19 11.4V17.5L17.4 23H7.2L2.2 14.2Q1.6 12.6 2.6 12Q3.8 11.4 5 12.6Z" fill="#fff" stroke="#16181d" stroke-width="1.2" stroke-linejoin="round"/><path d="M9.8 8.6V12.4M13 8.8V12.8M15.6 9.6V13.2" stroke="#16181d" stroke-width="1" stroke-linecap="round"/></svg>
<div class="a" style="left:320px;top:88px;width:1px;height:936px;background:#ebebee"></div>
<!-- collapse btn -->
<div class="a" style="left:252px;top:148px;width:32px;height:32px;border-radius:50%;background:#f8f9fb;border:1px solid #d9dbe3"></div>
<svg style="left:260px;top:156px" width="16" height="16" viewBox="0 0 16 16"><path d="M9.8 4L5.8 8L9.8 12" fill="none" stroke="#4b5060" stroke-width="1.5" stroke-linecap="round" stroke-linejoin="round"/></svg>
<!-- CORNERS -->
<svg style="left:0;top:0" width="1440" height="1024" viewBox="0 0 1440 1024"><path d="M0.00 0.00 L12.00 1.00 L8.70 2.00 L6.70 3.00 L5.40 4.00 L4.40 5.10 L3.70 6.20 L2.90 7.70 L2.00 9.10 L1.50 10.20 L0.00 11.50Z" fill="#fff"/><path d="M1440.00 0.00 L1428.00 1.00 L1431.30 2.00 L1433.30 3.00 L1434.60 4.00 L1435.60 5.10 L1436.30 6.20 L1437.10 7.70 L1438.00 9.10 L1438.50 10.20 L1440.00 11.50Z" fill="#fff"/><path d="M0.00 1024.00 L12.00 1023.00 L8.70 1022.00 L6.70 1021.00 L5.40 1020.00 L4.40 1018.90 L3.70 1017.80 L2.90 1016.30 L2.00 1014.90 L1.50 1013.80 L0.00 1012.50Z" fill="#fff"/><path d="M1440.00 1024.00 L1428.00 1023.00 L1431.30 1022.00 L1433.30 1021.00 L1434.60 1020.00 L1435.60 1018.90 L1436.30 1017.80 L1437.10 1016.30 L1438.00 1014.90 L1438.50 1013.80 L1440.00 1012.50Z" fill="#fff"/><path d="M0.00 0.00 L10.50 0.00 L8.00 1.30 L6.00 2.30 L4.70 3.30 L3.70 4.40 L3.00 5.50 L2.20 7.00 L1.30 8.40 L0.80 9.50 L0.00 10.50Z" fill="#000"/><path d="M1440.00 0.00 L1429.50 0.00 L1432.00 1.30 L1434.00 2.30 L1435.30 3.30 L1436.30 4.40 L1437.00 5.50 L1437.80 7.00 L1438.70 8.40 L1439.20 9.50 L1440.00 10.50Z" fill="#000"/><path d="M0.00 1024.00 L10.50 1024.00 L8.00 1022.70 L6.00 1021.70 L4.70 1020.70 L3.70 1019.60 L3.00 1018.50 L2.20 1017.00 L1.30 1015.60 L0.80 1014.50 L0.00 1013.50Z" fill="#000"/><path d="M1440.00 1024.00 L1429.50 1024.00 L1432.00 1022.70 L1434.00 1021.70 L1435.30 1020.70 L1436.30 1019.60 L1437.00 1018.50 L1437.80 1017.00 L1438.70 1015.60 L1439.20 1014.50 L1440.00 1013.50Z" fill="#000"/></svg>
</div></body></html>
